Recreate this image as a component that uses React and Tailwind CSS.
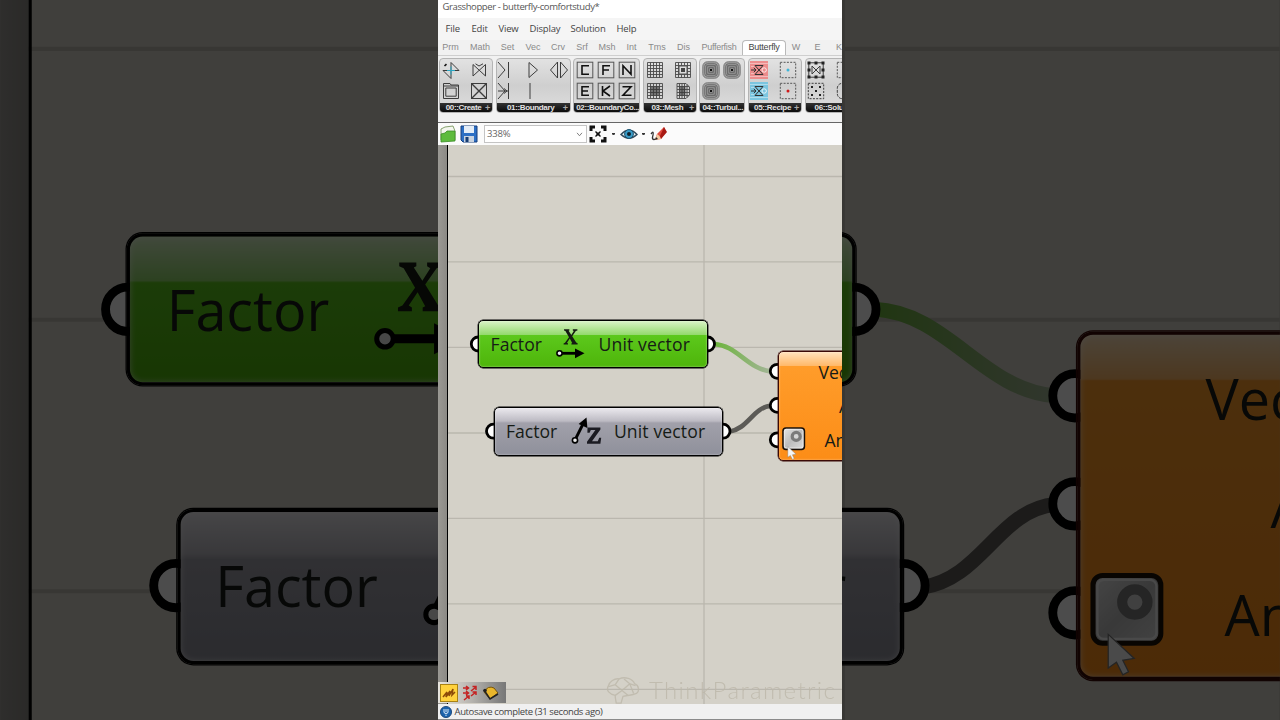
import React from "react";
import { clsx } from "clsx";

const MENU = [
  { label: "File", className: "w-[26px]" },
  { label: "Edit", className: "w-[27px]" },
  { label: "View", className: "w-[31px]" },
  { label: "Display", className: "w-[41px]" },
  { label: "Solution", className: "w-[46px]" },
  { label: "Help", className: "w-[30px]" },
];

const TABS = [
  { label: "Prm", className: "w-[25px]" },
  { label: "Math", className: "w-[34px]" },
  { label: "Set", className: "w-[21px]" },
  { label: "Vec", className: "w-[30px]" },
  { label: "Crv", className: "w-[20px]" },
  { label: "Srf", className: "w-[28px]" },
  { label: "Msh", className: "w-[22px]" },
  { label: "Int", className: "w-[27px]" },
  { label: "Tms", className: "w-[24px]" },
  { label: "Dis", className: "w-[29px]" },
  { label: "Pufferfish", className: "w-[44px] -translate-x-px tracking-[-0.3px]" },
  { label: "Butterfly", className: "w-[44px] tracking-[-0.2px]", active: true },
  { label: "W", className: "w-[20px]" },
  { label: "E", className: "w-[23px]" },
  { label: "K", className: "w-[20px]" },
];

function Icon({ children }) {
  return (
    <svg
      viewBox="0 0 18 18"
      className="size-[18px] shrink-0"
      fill="none"
      stroke="#3c3c3c"
      strokeWidth="1"
    >
      {children}
    </svg>
  );
}

function Letter({ d }) {
  return (
    <Icon>
      <rect x="1.2" y="1.2" width="15.6" height="15.6" stroke="#555" />
      <path d={d} stroke="#111" strokeWidth="1.6" />
    </Icon>
  );
}

function MeshIcon({ fill, cut }) {
  return (
    <Icon>
      <path
        d="M1.5 1.5H16.5V16.5H1.5ZM4.5 1.5V16.5M7.5 1.5V16.5M10.5 1.5V16.5M13.5 1.5V16.5M1.5 4.5H16.5M1.5 7.5H16.5M1.5 10.5H16.5M1.5 13.5H16.5"
        stroke="#4a4a4a"
        strokeWidth="0.9"
      />
      {cut && <rect x="5" y="5" width="8" height="8" fill="#ddd" stroke="#555" />}
      {fill && <rect x="4.5" y="4.5" width="9" height="9" fill="#333" fillOpacity="0.6" stroke="none" />}
      {cut && <rect x="7" y="7" width="4" height="4" fill="#444" stroke="none" />}
    </Icon>
  );
}

function RefinedMeshIcon() {
  return (
    <Icon>
      <path
        d="M3 1.5H12L15.5 5V13L12 16.5H3ZM5.5 1.5V16.5M8 1.5V16.5M10.5 1.5V16.5M13 2.5V15.5M3 4.5H15M3 7.5H15.5M3 10.5H15.5M3 13.5H15"
        stroke="#4a4a4a"
        strokeWidth="0.9"
      />
      <rect x="5.5" y="4.5" width="6" height="9" fill="#333" fillOpacity="0.6" stroke="none" />
    </Icon>
  );
}

function TurbulenceIcon() {
  return (
    <Icon>
      <rect x="0.8" y="0.8" width="16.4" height="16.4" rx="4.5" fill="#a4a4a4" stroke="#777" />
      <rect x="2.8" y="2.8" width="12.4" height="12.4" rx="2.5" stroke="#666" />
      <rect x="4.8" y="4.8" width="8.4" height="8.4" stroke="#555" />
      <rect x="6.8" y="6.8" width="4.4" height="4.4" stroke="#555" />
      <rect x="8" y="8" width="2" height="2" fill="#111" stroke="none" />
    </Icon>
  );
}

function RecipeIcon({ color }) {
  return (
    <Icon>
      <rect x="0" y="0" width="18" height="18" fill={color} fillOpacity="0.85" stroke="none" />
      <path d="M0 2.5H18M0 15.5H18M1 5.5H4M1 12.5H4" stroke="#fff" strokeOpacity="0.4" />
      <circle cx="14.2" cy="9" r="2.2" stroke="#fff" strokeOpacity="0.8" />
      <path d="M5 4.5L13 13.5H5L13 4.5ZM1 9H6M3.8 6.8L6 9L3.8 11.2" stroke="#333" />
    </Icon>
  );
}

function DashedIcon({ dot }) {
  return (
    <Icon>
      <rect x="1.3" y="1.3" width="15.4" height="15.4" strokeDasharray="2 1.3" stroke="#555" />
      <circle cx="9" cy="9" r="1.5" fill={dot} stroke="none" />
    </Icon>
  );
}

function SolutionIcon() {
  return (
    <Icon>
      <rect x="1.8" y="1.8" width="14.4" height="14.4" />
      <path d="M5 5V13L13 5V13Z" />
      <path
        d="M0.5 0.5h3v3h-3zM7.5 0.5h3v3h-3zM14.5 0.5h3v3h-3zM0.5 7.5h3v3h-3zM14.5 7.5h3v3h-3zM0.5 14.5h3v3h-3zM7.5 14.5h3v3h-3zM14.5 14.5h3v3h-3z"
        fill="#222"
        stroke="none"
      />
    </Icon>
  );
}

function ProbeIcon() {
  return (
    <Icon>
      <rect x="1.3" y="1.3" width="15.4" height="15.4" strokeDasharray="2 1.3" />
      <path
        d="M4 4h2v2h-2zM12 4h2v2h-2zM8 8h2v2h-2zM4 12h2v2h-2zM12 12h2v2h-2z"
        fill="#222"
        stroke="none"
      />
    </Icon>
  );
}

function CutIcon() {
  return (
    <Icon>
      <rect x="1.3" y="1.3" width="15.4" height="15.4" rx="5" strokeDasharray="3 1" stroke="#444" />
    </Icon>
  );
}

const GROUPS = [
  {
    label: "00::Create",
    className: "w-[54px]",
    grid: "grid-cols-[22px_34px]",
    more: true,
    icons: [
      <Icon>
        <path d="M9 9.5V1.5L17 9.5ZM9 9.5H1L9 17.5Z" />
        <path d="M5 9.5H13M9 5.5V13.5" stroke="#2aa7c4" />
        <path d="M2.5 5L4.5 3.2" stroke="#111" strokeWidth="1.6" />
      </Icon>,
      <Icon>
        <path d="M3 3.5V15L15.5 3.5V15L3 3.5M5.5 2.8L9 5L13 2.8" />
      </Icon>,
      <Icon>
        <path d="M1.5 1.5H8L9 3H16.5V16.5H1.5ZM3.8 6H14.2V14.2H3.8ZM2 4H16" />
      </Icon>,
      <Icon>
        <rect x="1.5" y="1.5" width="15" height="15" />
        <path d="M1.5 1.5L16.5 16.5M16.5 1.5L1.5 16.5" strokeWidth="1.4" />
      </Icon>,
    ],
  },
  {
    label: "01::Boundary",
    className: "w-[75px]",
    grid: "grid-cols-[17px_38px_14px]",
    more: true,
    icons: [
      <Icon>
        <path d="M2 1L9 9L2 17M12.5 1V17" />
      </Icon>,
      <Icon>
        <path d="M5 1.5V16.5L13.5 9Z" />
      </Icon>,
      <Icon>
        <path d="M7.5 1V17L0.5 9ZM10.5 1V17L17.5 9Z" />
      </Icon>,
      <Icon>
        <path d="M2 1L9 9L2 17M12.5 1V17M2 9H12M8 6.5L11 9L8 11.5" />
      </Icon>,
      <Icon>
        <path d="M6 1V17" />
      </Icon>,
    ],
  },
  {
    label: "02::BoundaryCo...",
    className: "w-[67px]",
    grid: "grid-cols-[21px_21px_21px]",
    icons: [
      <Letter d="M13 4.8H6V13.2H13" />,
      <Letter d="M6 14V4.8H13M6 9H12" />,
      <Letter d="M5 14V4.8L13 13.2V4" />,
      <Letter d="M13 4.8H6V13.2H13M6 9H12" />,
      <Letter d="M5.5 4V14M13 4L6 9L13 14" />,
      <Letter d="M4.5 4.8H13L5 13.2H13.5" />,
    ],
  },
  {
    label: "03::Mesh",
    className: "w-[54px]",
    grid: "grid-cols-[22px_34px]",
    more: true,
    icons: [<MeshIcon />, <MeshIcon cut />, <MeshIcon fill />, <RefinedMeshIcon />],
  },
  {
    label: "04::Turbul...",
    className: "w-[46px]",
    grid: "grid-cols-[21px_21px]",
    icons: [<TurbulenceIcon />, <TurbulenceIcon />, <TurbulenceIcon />],
  },
  {
    label: "05::Recipe",
    className: "w-[54px]",
    grid: "grid-cols-[21px_36px]",
    more: true,
    icons: [
      <RecipeIcon color="#f07f7f" />,
      <DashedIcon dot="#3fb6d8" />,
      <RecipeIcon color="#6cc3e2" />,
      <DashedIcon dot="#d01818" />,
    ],
  },
  {
    label: "06::Solution",
    className: "w-[62px]",
    grid: "grid-cols-[21px_36px]",
    icons: [<SolutionIcon />, <DashedIcon dot="#333" />, <ProbeIcon />, <CutIcon />],
  },
];

function RibbonGroup({ group }) {
  return (
    <div
      className={clsx(
        "flex h-[55px] shrink-0 flex-col overflow-hidden rounded-[4px] border border-[#b4b4b4] bg-linear-to-b from-[#e2e2e2] via-[#cfcfcf] to-[#dedede]",
        group.className
      )}
    >
      <div
        className={clsx(
          "grid h-[44px] shrink-0 content-start justify-start justify-items-center gap-y-[3px] pt-[2px]",
          group.grid
        )}
      >
        {group.icons.map((icon, i) => (
          <React.Fragment key={i}>{icon}</React.Fragment>
        ))}
      </div>
      <div className="-mx-px flex h-[11px] items-center bg-linear-to-b from-[#333] to-[#080808] px-[3px] text-[8px] leading-[10px] font-bold tracking-[-0.35px] whitespace-nowrap text-[#e4e4e4]">
        <span className="flex-1 text-center">{group.label}</span>
        {group.more && <span className="text-[9px] text-[#aaa]">+</span>}
      </div>
    </div>
  );
}

function Toolbar() {
  return (
    <div className="flex h-[23px] shrink-0 items-center border-t border-[#666] bg-[#fbfbfb] pl-[2px]">
      <svg viewBox="0 0 16 18" className="h-[18px] w-4">
        <path d="M1 4L5 2L13 1L15 6V15H1Z" fill="#f3f6ee" stroke="#6a8c4c" strokeWidth="0.8" />
        <path d="M1 9L5 8L7 6H15V16L1 17Z" fill="#5dbb3c" stroke="#3b8b27" strokeWidth="0.8" />
      </svg>
      <svg viewBox="0 0 18 18" className="ml-[4px] size-[18px]">
        <path d="M1 1H17V17H3L1 15Z" fill="#2c6fc4" stroke="#163e7c" />
        <rect x="4" y="1" width="10" height="7" fill="#e4edf7" />
        <rect x="4" y="11" width="10" height="6" fill="#c9d3e0" />
        <rect x="5.5" y="12" width="3" height="5" fill="#173d73" />
      </svg>
      <div className="ml-[6px] flex h-[18px] w-[103px] items-center justify-between border border-[#c4c4c4] bg-white pr-[3px] pl-[2px] text-[9.5px] tracking-[-0.2px] text-[#666]">
        <span>338%</span>
        <svg viewBox="0 0 8 6" className="h-[5px] w-[7px]" fill="none" stroke="#666">
          <path d="M1 1L4 4.5L7 1" />
        </svg>
      </div>
      <svg viewBox="0 0 18 18" className="ml-[2px] size-[18px]" stroke="#111" fill="none">
        <path d="M2 6V2H6M12 2H16V6M16 12V16H12M6 16H2V12" strokeWidth="3" />
        <path d="M6.5 6.5L11.5 11.5M11.5 6.5L6.5 11.5" strokeWidth="1.4" />
        <circle cx="9" cy="9" r="1.6" fill="#111" stroke="none" />
      </svg>
      <span className="mx-[5px] h-[2px] w-[3px] rounded-b-full bg-[#333]" />
      <svg viewBox="0 0 18 14" className="h-[14px] w-[18px]">
        <path d="M1 7.5Q9 -1 17 7.5Q9 15 1 7.5Z" fill="#e9f3f7" stroke="#30495a" strokeWidth="1.5" />
        <circle cx="9" cy="7" r="4.4" fill="#3a9cc8" stroke="#19526f" />
        <circle cx="9" cy="7" r="2" fill="#10232d" />
      </svg>
      <span className="mx-[4px] h-[2px] w-[3px] rounded-b-full bg-[#333]" />
      <svg viewBox="0 0 17 16" className="ml-[1px] h-4 w-[17px]">
        <path d="M1 8Q4 4 3 9Q1 15 6 13" fill="none" stroke="#333" strokeWidth="1.3" />
        <path d="M5 14L7 8L14 1L16 6L11 13Z" fill="#e04a3e" />
        <path d="M14 1L17 6L11 13L10 10Z" fill="#a81a14" />
        <path d="M5 14L7 8L9.5 10L11 13Z" fill="#f2c9a0" />
        <path d="M5 14L6 11L8 13Z" fill="#222" />
      </svg>
    </div>
  );
}

function Header() {
  return (
    <header className="flex h-[145px] shrink-0 flex-col bg-[#f1f1f1] font-['Open_Sans','Noto_Sans',sans-serif]">
      <div className="flex h-[18px] shrink-0 items-center bg-white pb-[3px] pl-[4.5px] text-[9.5px] tracking-[-0.39px] text-[#555]">
        Grasshopper - butterfly-comfortstudy*
      </div>
      <nav className="flex h-[22px] shrink-0 items-center bg-[#f5f5f5] pl-[7.5px] text-[9.5px] tracking-[-0.18px] text-[#444]">
        {MENU.map((item) => (
          <span key={item.label} className={clsx("shrink-0 whitespace-nowrap", item.className)}>
            {item.label}
          </span>
        ))}
      </nav>
      <div className="flex h-[15px] shrink-0 items-end font-['Liberation_Sans',sans-serif] text-[9px] text-[#8a8a8a]">
        {TABS.map((tab) => (
          <span
            key={tab.label}
            className={clsx(
              "flex h-[15px] shrink-0 items-center justify-center whitespace-nowrap",
              tab.className,
              tab.active && "rounded-t-[4px] border border-b-0 border-[#b9b9b9] bg-white pb-[1px] text-[#444]"
            )}
          >
            {tab.label}
          </span>
        ))}
      </div>
      <div className="flex h-[67px] shrink-0 gap-[2.6px] border-t border-[#cfcfcf] pt-[2px] pl-[1px] font-['Liberation_Sans',sans-serif]">
        {GROUPS.map((group) => (
          <RibbonGroup key={group.label} group={group} />
        ))}
      </div>
      <Toolbar />
    </header>
  );
}

const NODE_COLORS = {
  green:
    "border-black shadow-[0_0_0_0.4px_#000,inset_0_0_2px_rgba(255,255,255,0.6)] bg-[linear-gradient(to_bottom,#d9f3c6_0,#93d96c_14px,#5cc81c_14.5px,#4eb50a_100%)]",
  gray: "border-black shadow-[0_0_0_0.4px_#000,inset_0_0_2px_rgba(255,255,255,0.6)] bg-[linear-gradient(to_bottom,#ebe9ee_0,#bdbbc3_13px,#a1a0aa_15px,#8f909b_100%)]",
  orange:
    "border-[#3a0a06] shadow-[0_0_0_0.4px_#3a0a06,inset_0_0_2px_rgba(255,255,255,0.6)] bg-[linear-gradient(to_bottom,#ffe3bd_0,#ffb868_14px,#ff9c2a_14.5px,#fc8d17_100%)]",
};

function Node({ color, className, children }) {
  return (
    <div
      className={clsx(
        "absolute rounded-[5px] border text-[17.6px] leading-[24px] text-[#161b16]",
        NODE_COLORS[color],
        className
      )}
    >
      {children}
    </div>
  );
}

const GRIPS = [
  [40.3, 199],
  [269.5, 199],
  [55.5, 286.2],
  [285, 286.2],
  [339.3, 226.3],
  [339.3, 260.4],
  [339.3, 294.8],
];

const GRID_ROWS = [31.5, 116.8, 202.3, 288, 373.3, 458.8, 544.3];

function Wires() {
  return (
    <svg viewBox="0 0 404 559" className="absolute inset-0 h-[559px] w-[404px]" fill="none">
      <defs>
        <linearGradient id="wire" x1="0" x2="1" y1="0" y2="0">
          <stop offset="0" stopColor="#6cb43c" />
          <stop offset="1" stopColor="#a3b597" />
        </linearGradient>
      </defs>
      <g stroke="#bab7ae" strokeWidth="1.3">
        {GRID_ROWS.map((y) => (
          <path key={y} d={`M0 ${y}H404`} />
        ))}
        <path d="M266 0V559" />
      </g>
      <path d="M276 199C299 200 310 224.5 333 226.3" stroke="url(#wire)" strokeWidth="4.7" />
      <path d="M291 286.8C310 284 315 262.5 333 260.6" stroke="#5c5b57" strokeWidth="4.7" />
      {GRIPS.map(([x, y]) => (
        <circle key={`${x}-${y}`} cx={x} cy={y} r="7" fill="#fff" stroke="#000" strokeWidth="2.8" />
      ))}
    </svg>
  );
}

function Canvas({ children }) {
  return (
    <div className="relative h-[559px] w-[404px] shrink-0 overflow-hidden bg-[#d4d1c8] font-['Open_Sans','Noto_Sans',sans-serif]">
      <Wires />
      <div className="absolute top-0 left-0 h-full w-[10px] border-r-[1.5px] border-black bg-linear-to-r from-[#9b9994] to-[#8c8a85]" />

      <Node color="green" className="top-[174.6px] left-[40.2px] h-[48.8px] w-[229.6px]">
        <div className="flex h-full items-center pl-[11.4px]">
          <span className="w-[64px]">Factor</span>
          <svg viewBox="0 0 30 34" className="h-[34px] w-[30px]">
            <path
              d="M9 2.2H14.4V3.4L13.6 3.8L16.3 8L18.8 4L17.8 3.4V2.2H22.4V3.4L20.8 4L17.2 9.2L21.2 15.6L22.6 16.2V17.6H16.4V16.4L17.2 16L14.8 11.6L12 15.8L13 16.4V17.6H8.6V16.4L10 15.8L14 10.2L10.4 4L9 3.4Z"
              fill="#141a12"
            />
            <path d="M4 26.3H22" stroke="#000" strokeWidth="2.8" />
            <path d="M20 21.4L29.5 26.3L20 31.2Z" fill="#000" />
            <circle cx="4.5" cy="26.3" r="2.6" fill="#eee" stroke="#000" strokeWidth="1.6" />
          </svg>
          <span className="ml-[14px] tracking-[0.12px] whitespace-nowrap">Unit vector</span>
        </div>
      </Node>

      <Node color="gray" className="top-[262px] left-[55.5px] h-[48.8px] w-[229.6px]">
        <div className="flex h-full items-center pl-[11.4px]">
          <span className="w-[64px]">Factor</span>
          <svg viewBox="0 0 32 34" className="h-[34px] w-[32px]">
            <path d="M5 26L13 10" stroke="#000" strokeWidth="2.8" />
            <path d="M16.5 3.5L17.4 14L8.6 10Z" fill="#000" />
            <circle cx="5" cy="26.3" r="2.6" fill="#eee" stroke="#000" strokeWidth="1.6" />
            <path
              d="M17.5 13.5H30.4V15.6L22 27.2H27.8L29.2 23.8H31.2L30.4 29.8H17V27.8L25.4 16H20.8L19.6 18.8H17.4Z"
              fill="#1b1b22"
            />
          </svg>
          <span className="ml-[12px] tracking-[0.12px] whitespace-nowrap">Unit vector</span>
        </div>
      </Node>

      <Node color="orange" className="top-[205.6px] left-[339.5px] h-[110.2px] w-[150px]">
        <div className="flex flex-col pt-[8px] pl-[40px]">
          <span className="h-[34px]">Vec</span>
          <span className="h-[34px] pl-[20.5px]">A</span>
          <span className="h-[24px] pl-[6px]">An</span>
        </div>
      </Node>

      <svg viewBox="0 0 28 36" className="absolute top-[280px] left-[343px] h-[36px] w-[28px]">
        <defs>
          <linearGradient id="knob" x1="0" x2="1" y1="0" y2="1">
            <stop offset="0" stopColor="#e8e8e8" />
            <stop offset="0.5" stopColor="#bdbdbd" />
            <stop offset="1" stopColor="#dedede" />
          </linearGradient>
        </defs>
        <rect x="2" y="3" width="21.4" height="21.4" rx="3" fill="url(#knob)" stroke="#1a1008" strokeWidth="1.6" />
        <rect x="3.4" y="4.4" width="18.6" height="18.6" rx="2" fill="none" stroke="#f4f4f4" strokeWidth="0.7" />
        <circle cx="15.2" cy="11.4" r="4" fill="#d6d6d6" stroke="#7b7b7b" strokeWidth="3.2" />
        <path
          d="M6.8 21.6V32.2L9.4 30.4L11.4 34.4L13.2 33.4L11.4 29.8L15 29.2Z"
          fill="#f6f6f6"
          stroke="#777"
          strokeWidth="0.4"
        />
      </svg>

      {children}
    </div>
  );
}

function Watermark() {
  return (
    <div className="absolute top-[530px] left-[168px] flex items-center gap-[9px] whitespace-nowrap text-[#bdb8aa] opacity-80">
      <svg viewBox="0 0 34 30" className="h-[29px] w-[34px]" fill="none" stroke="currentColor" strokeWidth="1.4">
        <path d="M9 20C3 19 -1 15 2 10C3 6 8 2 13 3C19 0 27 3 29 8C34 10 34 16 31 18C27 20 21 20 17 21L15 28H10L9 22Z" />
        <path d="M2 11L9 9L13 3M9 9L16 15L24 8L30 10M16 15L9 20M16 15L22 20M24 8L18 3M24 8L28 18" />
      </svg>
      <span className="font-['Lato',sans-serif] text-[24px] leading-[30px] font-light tracking-[1.35px]">
        ThinkParametric
      </span>
    </div>
  );
}

function DisplayBar() {
  return (
    <div className="absolute top-[537px] left-0 flex h-[21px] w-[68px] items-center gap-[3px] bg-linear-to-r from-[#e9e6df] via-[#b5b3ae] to-[#777] pl-[2px]">
      <svg viewBox="0 0 18 18" className="size-[18px]">
        <rect x="0.5" y="0.5" width="17" height="17" fill="#ffd23e" stroke="#a98314" />
        <path d="M3 13L7 8L6 13L10 7L9 12L13 5L12 11L15 8" fill="none" stroke="#8c4a08" strokeWidth="1.5" />
      </svg>
      <svg viewBox="0 0 18 18" className="size-[18px]" fill="none" stroke="#c52222" strokeWidth="1.5">
        <path d="M2 4H7M5 2L7.5 4L5 6M10 7L15 3M11.5 2.5H15V6M2 9H7M5 7L7.5 9L5 11M10 12L15 8M11.5 8H15V11M3 16L8 12M5 12H8V15" />
      </svg>
      <svg viewBox="0 0 18 18" className="size-[18px]">
        <path d="M2 8Q6 1 12 4L16 9L8 15Z" fill="#e9b62c" stroke="#77560c" />
        <path d="M2 6L8 15L16 10" fill="none" stroke="#222" strokeWidth="1.5" />
        <circle cx="3" cy="6.5" r="1.8" fill="#222" />
      </svg>
    </div>
  );
}

function StatusBar() {
  return (
    <footer className="flex h-[16px] shrink-0 items-center gap-[3px] border-b border-[#8a8a8a] bg-[#f0f0f0] pl-[1.5px] font-['Open_Sans','Noto_Sans',sans-serif] text-[9.5px] leading-[14px] tracking-[-0.38px] text-[#444]">
      <svg viewBox="0 0 12 12" className="size-3">
        <circle cx="6" cy="6" r="5.6" fill="#1c62ab" stroke="#0e3b70" strokeWidth="0.8" />
        <path d="M4 3V6Q4 7.5 6 7.5Q8 7.5 8 6V3M6 3V6M6 8.6V10" fill="none" stroke="#dcebfa" />
      </svg>
      <span>Autosave complete (31 seconds ago)</span>
    </footer>
  );
}

function Backdrop() {
  return (
    <div aria-hidden="true" className="absolute inset-0 flex justify-center overflow-hidden brightness-30">
      <div className="h-[720px] w-[404px] shrink-0 scale-[3.168] pt-[145px]">
        <Canvas />
      </div>
    </div>
  );
}

function App() {
  return (
    <div className="relative flex h-[720px] w-[1280px] justify-center overflow-hidden bg-black">
      <Backdrop />
      <main className="relative flex h-[720px] w-[404px] flex-col overflow-hidden bg-[#d9d9d9]">
        <Header />
        <Canvas>
          <Watermark />
          <DisplayBar />
        </Canvas>
        <StatusBar />
      </main>
    </div>
  );
}

export default App;
